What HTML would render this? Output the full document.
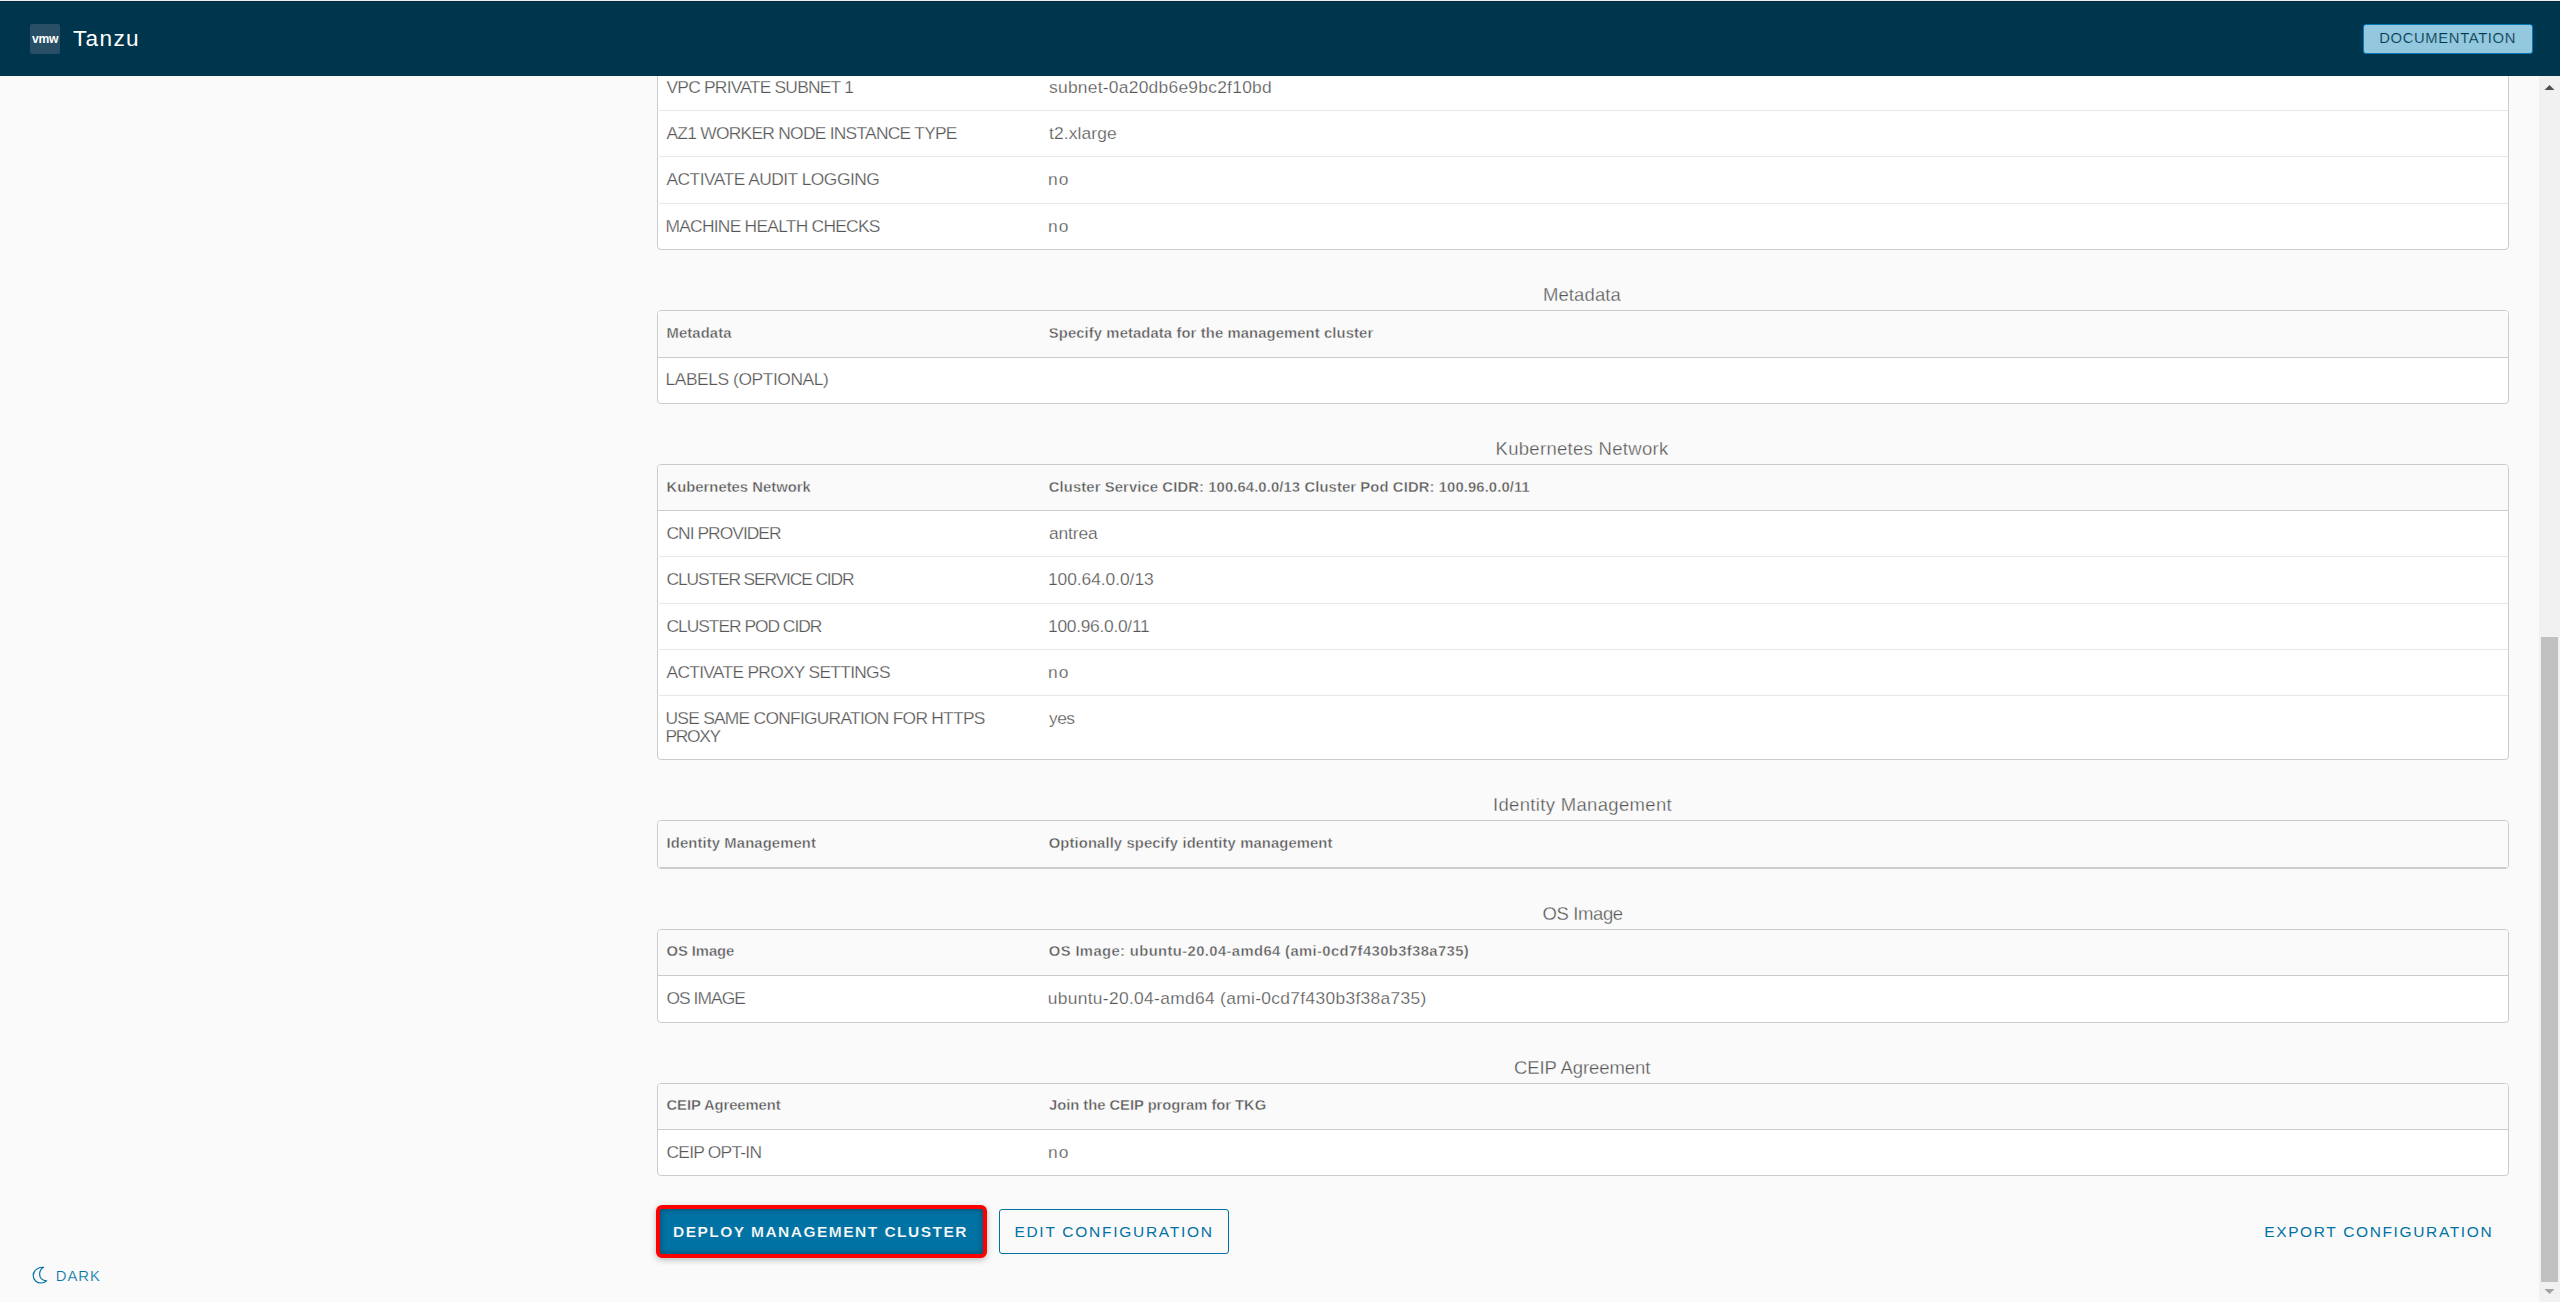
<!DOCTYPE html>
<html><head><meta charset="utf-8"><title>Tanzu</title>
<style>
html,body{margin:0;padding:0;width:2560px;height:1302px;overflow:hidden;background:#fafafa;font-family:"Liberation Sans",sans-serif;}
.a{position:absolute;}
.hdr{z-index:5}
.t{position:absolute;white-space:pre;font-family:"Liberation Sans",sans-serif;}
.tbl{position:absolute;left:657px;width:1850px;border:1px solid #cccccc;border-radius:4px;background:#ffffff;box-sizing:content-box;overflow:hidden;}
.hd{position:absolute;left:0;right:0;top:0;background:#fafafa;border-bottom:1px solid #cccccc;}
.sep{position:absolute;left:1px;right:0;height:1px;background:#e8e8e8;}
</style></head><body>
<!-- table 1 (partial) -->
<div class="tbl" style="top:-30px;height:278px;">
  <div class="sep" style="top:139px"></div>
  <div class="sep" style="top:185px"></div>
  <div class="sep" style="top:232px"></div>
</div>
<!-- table 2 metadata -->
<div class="tbl" style="top:310px;height:92px;">
  <div class="hd" style="height:46px"></div>
</div>
<!-- table 3 k8s -->
<div class="tbl" style="top:464px;height:294px;">
  <div class="hd" style="height:45px"></div>
  <div class="sep" style="top:91px"></div>
  <div class="sep" style="top:138px"></div>
  <div class="sep" style="top:184px"></div>
  <div class="sep" style="top:230px"></div>
</div>
<!-- table 4 identity -->
<div class="tbl" style="top:820px;height:47px;">
  <div class="hd" style="height:46px"></div>
</div>
<!-- table 5 os image -->
<div class="tbl" style="top:929px;height:92px;">
  <div class="hd" style="height:45px"></div>
</div>
<!-- table 6 ceip -->
<div class="tbl" style="top:1083px;height:91px;">
  <div class="hd" style="height:45px"></div>
</div>

<!-- buttons -->
<div class="a" style="left:656px;top:1205px;width:323px;height:45px;border:4px solid #ff0000;border-radius:6px;box-shadow:0 2px 6px rgba(0,0,0,0.25);background:#0072a3"></div>
<div class="a" style="left:660px;top:1209px;width:323px;height:45px;border-radius:3px;background:#0072a3;box-shadow:inset 0 0 6px rgba(0,0,0,0.35)"></div>
<div class="a" style="left:999px;top:1209px;width:228px;height:43px;border:1.25px solid #0072a3;border-radius:3px;"></div>

<!-- dark toggle moon -->
<svg class="a" style="left:30px;top:1264px" width="20" height="22" viewBox="0 0 20 22">
  <path d="M13.6 3.3 C8.2 2.8 3.2 6.6 3.2 11.5 C3.2 16.0 7.0 19.0 11.2 19.0 C13.4 19.0 15.2 18.2 16.6 16.8 C12.4 17.0 9.6 13.8 9.6 10.2 C9.6 7.3 11.1 4.7 13.6 3.3 Z" fill="none" stroke="#0072a3" stroke-width="1.2" stroke-linejoin="round"/>
</svg>

<!-- scrollbar -->
<div class="a" style="left:2539px;top:76px;width:21px;height:1226px;background:#f1f1f1"></div>
<div class="a" style="left:2541px;top:637px;width:17px;height:645px;background:#c1c1c1"></div>
<svg class="a" style="left:2539px;top:76px" width="21" height="20"><path d="M5.5 14 L10.5 9 L15.5 14 Z" fill="#505050"/></svg>
<svg class="a" style="left:2539px;top:1282px" width="21" height="20"><path d="M5.5 7 L15.5 7 L10.5 12 Z" fill="#a3a3a3"/></svg>

<div class=t style="left:666.50px;top:78.66px;font-size:17.4px;line-height:17.4px;font-weight:400;color:#565656;letter-spacing:-0.769px;z-index:0;-webkit-text-stroke:0.25px #ffffff;">VPC PRIVATE SUBNET 1</div>
<div class=t style="left:1049.00px;top:78.66px;font-size:17.4px;line-height:17.4px;font-weight:400;color:#565656;letter-spacing:0.264px;z-index:0;-webkit-text-stroke:0.25px #ffffff;">subnet-0a20db6e9bc2f10bd</div>
<div class=t style="left:666.50px;top:124.66px;font-size:17.4px;line-height:17.4px;font-weight:400;color:#565656;letter-spacing:-0.732px;z-index:0;-webkit-text-stroke:0.25px #ffffff;">AZ1 WORKER NODE INSTANCE TYPE</div>
<div class=t style="left:1049.00px;top:124.66px;font-size:17.4px;line-height:17.4px;font-weight:400;color:#565656;letter-spacing:0.121px;z-index:0;-webkit-text-stroke:0.25px #ffffff;">t2.xlarge</div>
<div class=t style="left:666.50px;top:170.91px;font-size:17.4px;line-height:17.4px;font-weight:400;color:#565656;letter-spacing:-0.520px;z-index:0;-webkit-text-stroke:0.25px #ffffff;">ACTIVATE AUDIT LOGGING</div>
<div class=t style="left:1048.00px;top:170.91px;font-size:17.4px;line-height:17.4px;font-weight:400;color:#565656;letter-spacing:1.078px;z-index:0;-webkit-text-stroke:0.25px #ffffff;">no</div>
<div class=t style="left:665.50px;top:218.41px;font-size:17.4px;line-height:17.4px;font-weight:400;color:#565656;letter-spacing:-0.740px;z-index:0;-webkit-text-stroke:0.25px #ffffff;">MACHINE HEALTH CHECKS</div>
<div class=t style="left:1048.00px;top:218.41px;font-size:17.4px;line-height:17.4px;font-weight:400;color:#565656;letter-spacing:1.078px;z-index:0;-webkit-text-stroke:0.25px #ffffff;">no</div>
<div class=t style="left:1542.90px;top:285.55px;font-size:18.5px;line-height:18.5px;font-weight:400;color:#565656;letter-spacing:0.122px;z-index:0;-webkit-text-stroke:0.3px #fafafa;">Metadata</div>
<div class=t style="left:1495.50px;top:439.55px;font-size:18.5px;line-height:18.5px;font-weight:400;color:#565656;letter-spacing:0.302px;z-index:0;-webkit-text-stroke:0.3px #fafafa;">Kubernetes Network</div>
<div class=t style="left:1493.00px;top:795.55px;font-size:18.5px;line-height:18.5px;font-weight:400;color:#565656;letter-spacing:0.326px;z-index:0;-webkit-text-stroke:0.3px #fafafa;">Identity Management</div>
<div class=t style="left:1542.62px;top:904.55px;font-size:18.5px;line-height:18.5px;font-weight:400;color:#565656;letter-spacing:-0.392px;z-index:0;-webkit-text-stroke:0.3px #fafafa;">OS Image</div>
<div class=t style="left:1514.00px;top:1058.55px;font-size:18.5px;line-height:18.5px;font-weight:400;color:#565656;letter-spacing:-0.090px;z-index:0;-webkit-text-stroke:0.3px #fafafa;">CEIP Agreement</div>
<div class=t style="left:666.50px;top:325.60px;font-size:14.8px;line-height:14.8px;font-weight:700;color:#565656;letter-spacing:0.120px;z-index:0;-webkit-text-stroke:0.4px #fafafa;">Metadata</div>
<div class=t style="left:1048.75px;top:325.60px;font-size:14.8px;line-height:14.8px;font-weight:700;color:#565656;letter-spacing:0.109px;z-index:0;-webkit-text-stroke:0.4px #fafafa;">Specify metadata for the management cluster</div>
<div class=t style="left:665.50px;top:371.41px;font-size:17.4px;line-height:17.4px;font-weight:400;color:#565656;letter-spacing:-0.425px;z-index:0;-webkit-text-stroke:0.25px #ffffff;">LABELS (OPTIONAL)</div>
<div class=t style="left:666.50px;top:479.60px;font-size:14.8px;line-height:14.8px;font-weight:700;color:#565656;letter-spacing:0.020px;z-index:0;-webkit-text-stroke:0.4px #fafafa;">Kubernetes Network</div>
<div class=t style="left:1048.75px;top:479.60px;font-size:14.8px;line-height:14.8px;font-weight:700;color:#565656;letter-spacing:0.110px;z-index:0;-webkit-text-stroke:0.4px #fafafa;">Cluster Service CIDR: 100.64.0.0/13 Cluster Pod CIDR: 100.96.0.0/11</div>
<div class=t style="left:666.50px;top:525.41px;font-size:17.4px;line-height:17.4px;font-weight:400;color:#565656;letter-spacing:-0.960px;z-index:0;-webkit-text-stroke:0.25px #ffffff;">CNI PROVIDER</div>
<div class=t style="left:1049.00px;top:525.41px;font-size:17.4px;line-height:17.4px;font-weight:400;color:#565656;letter-spacing:-0.128px;z-index:0;-webkit-text-stroke:0.25px #ffffff;">antrea</div>
<div class=t style="left:666.50px;top:570.66px;font-size:17.4px;line-height:17.4px;font-weight:400;color:#565656;letter-spacing:-1.122px;z-index:0;-webkit-text-stroke:0.25px #ffffff;">CLUSTER SERVICE CIDR</div>
<div class=t style="left:1048.00px;top:570.66px;font-size:17.4px;line-height:17.4px;font-weight:400;color:#565656;letter-spacing:-0.058px;z-index:0;-webkit-text-stroke:0.25px #ffffff;">100.64.0.0/13</div>
<div class=t style="left:666.50px;top:617.66px;font-size:17.4px;line-height:17.4px;font-weight:400;color:#565656;letter-spacing:-1.015px;z-index:0;-webkit-text-stroke:0.25px #ffffff;">CLUSTER POD CIDR</div>
<div class=t style="left:1048.00px;top:617.66px;font-size:17.4px;line-height:17.4px;font-weight:400;color:#565656;letter-spacing:-0.284px;z-index:0;-webkit-text-stroke:0.25px #ffffff;">100.96.0.0/11</div>
<div class=t style="left:666.50px;top:664.16px;font-size:17.4px;line-height:17.4px;font-weight:400;color:#565656;letter-spacing:-0.710px;z-index:0;-webkit-text-stroke:0.25px #ffffff;">ACTIVATE PROXY SETTINGS</div>
<div class=t style="left:1048.00px;top:664.16px;font-size:17.4px;line-height:17.4px;font-weight:400;color:#565656;letter-spacing:1.078px;z-index:0;-webkit-text-stroke:0.25px #ffffff;">no</div>
<div class=t style="left:665.50px;top:710.41px;font-size:17.4px;line-height:17.4px;font-weight:400;color:#565656;letter-spacing:-0.736px;z-index:0;-webkit-text-stroke:0.25px #ffffff;">USE SAME CONFIGURATION FOR HTTPS</div>
<div class=t style="left:665.50px;top:727.91px;font-size:17.4px;line-height:17.4px;font-weight:400;color:#565656;letter-spacing:-1.321px;z-index:0;-webkit-text-stroke:0.25px #ffffff;">PROXY</div>
<div class=t style="left:1049.00px;top:710.41px;font-size:17.4px;line-height:17.4px;font-weight:400;color:#565656;letter-spacing:-0.559px;z-index:0;-webkit-text-stroke:0.25px #ffffff;">yes</div>
<div class=t style="left:666.50px;top:835.60px;font-size:14.8px;line-height:14.8px;font-weight:700;color:#565656;letter-spacing:0.126px;z-index:0;-webkit-text-stroke:0.4px #fafafa;">Identity Management</div>
<div class=t style="left:1048.75px;top:835.60px;font-size:14.8px;line-height:14.8px;font-weight:700;color:#565656;letter-spacing:0.111px;z-index:0;-webkit-text-stroke:0.4px #fafafa;">Optionally specify identity management</div>
<div class=t style="left:666.50px;top:944.10px;font-size:14.8px;line-height:14.8px;font-weight:700;color:#565656;letter-spacing:-0.075px;z-index:0;-webkit-text-stroke:0.4px #fafafa;">OS Image</div>
<div class=t style="left:1048.75px;top:944.10px;font-size:14.8px;line-height:14.8px;font-weight:700;color:#565656;letter-spacing:0.381px;z-index:0;-webkit-text-stroke:0.4px #fafafa;">OS Image: ubuntu-20.04-amd64 (ami-0cd7f430b3f38a735)</div>
<div class=t style="left:666.50px;top:989.91px;font-size:17.4px;line-height:17.4px;font-weight:400;color:#565656;letter-spacing:-0.950px;z-index:0;-webkit-text-stroke:0.25px #ffffff;">OS IMAGE</div>
<div class=t style="left:1047.75px;top:989.91px;font-size:17.4px;line-height:17.4px;font-weight:400;color:#565656;letter-spacing:0.319px;z-index:0;-webkit-text-stroke:0.25px #ffffff;">ubuntu-20.04-amd64 (ami-0cd7f430b3f38a735)</div>
<div class=t style="left:666.50px;top:1098.10px;font-size:14.8px;line-height:14.8px;font-weight:700;color:#565656;letter-spacing:-0.078px;z-index:0;-webkit-text-stroke:0.4px #fafafa;">CEIP Agreement</div>
<div class=t style="left:1049.00px;top:1098.10px;font-size:14.8px;line-height:14.8px;font-weight:700;color:#565656;letter-spacing:-0.042px;z-index:0;-webkit-text-stroke:0.4px #fafafa;">Join the CEIP program for TKG</div>
<div class=t style="left:666.50px;top:1143.91px;font-size:17.4px;line-height:17.4px;font-weight:400;color:#565656;letter-spacing:-0.758px;z-index:0;-webkit-text-stroke:0.25px #ffffff;">CEIP OPT-IN</div>
<div class=t style="left:1048.00px;top:1143.91px;font-size:17.4px;line-height:17.4px;font-weight:400;color:#565656;letter-spacing:1.078px;z-index:0;-webkit-text-stroke:0.25px #ffffff;">no</div>
<div class=t style="left:673.00px;top:1223.80px;font-size:15.5px;line-height:15.5px;font-weight:700;color:#ffffff;letter-spacing:1.473px;z-index:0;-webkit-text-stroke:0.2px #0072a3;">DEPLOY MANAGEMENT CLUSTER</div>
<div class=t style="left:1014.40px;top:1223.95px;font-size:15.5px;line-height:15.5px;font-weight:400;color:#0072a3;letter-spacing:1.724px;z-index:0;">EDIT CONFIGURATION</div>
<div class=t style="left:2264.20px;top:1223.95px;font-size:15.5px;line-height:15.5px;font-weight:400;color:#0072a3;letter-spacing:1.640px;z-index:0;">EXPORT CONFIGURATION</div>
<div class=t style="left:55.70px;top:1268.65px;font-size:14.8px;line-height:14.8px;font-weight:400;color:#0072a3;letter-spacing:1.020px;z-index:0;-webkit-text-stroke:0.2px #fafafa;">DARK</div>
<div class=t style="left:73.00px;top:27.66px;font-size:22.6px;line-height:22.6px;font-weight:400;color:#ffffff;letter-spacing:1.319px;z-index:6;">Tanzu</div>
<div class=t style="left:2379.20px;top:30.85px;font-size:14.8px;line-height:14.8px;font-weight:400;color:#00364d;letter-spacing:0.648px;z-index:6;-webkit-text-stroke:0.2px #93c8de;">DOCUMENTATION</div>
<div class="a" style="left:0;top:0;width:2560px;height:76px;z-index:5">
<!-- header -->
<div class="a" style="left:0;top:0;width:2560px;height:1px;background:#efedec"></div>
<div class="a" style="left:0;top:1px;width:2560px;height:75px;background:#00364d"></div>
<div class="a" style="left:0;top:1px;width:2560px;height:1px;background:#002a40"></div>
<div class="a" style="left:30px;top:24px;width:30px;height:30px;border-radius:2px;background:#284f66"></div>
<div class="t" style="left:31.5px;top:31px;font-size:13.5px;line-height:16px;font-weight:700;color:#fff;letter-spacing:-0.3px;transform:scaleX(0.9);transform-origin:0 0">vmw</div>
<div class="a" style="left:2363px;top:24px;width:168px;height:28px;border:1px solid #0079b8;border-radius:3px;background:#93c8de"></div>

</div>

</body></html>
